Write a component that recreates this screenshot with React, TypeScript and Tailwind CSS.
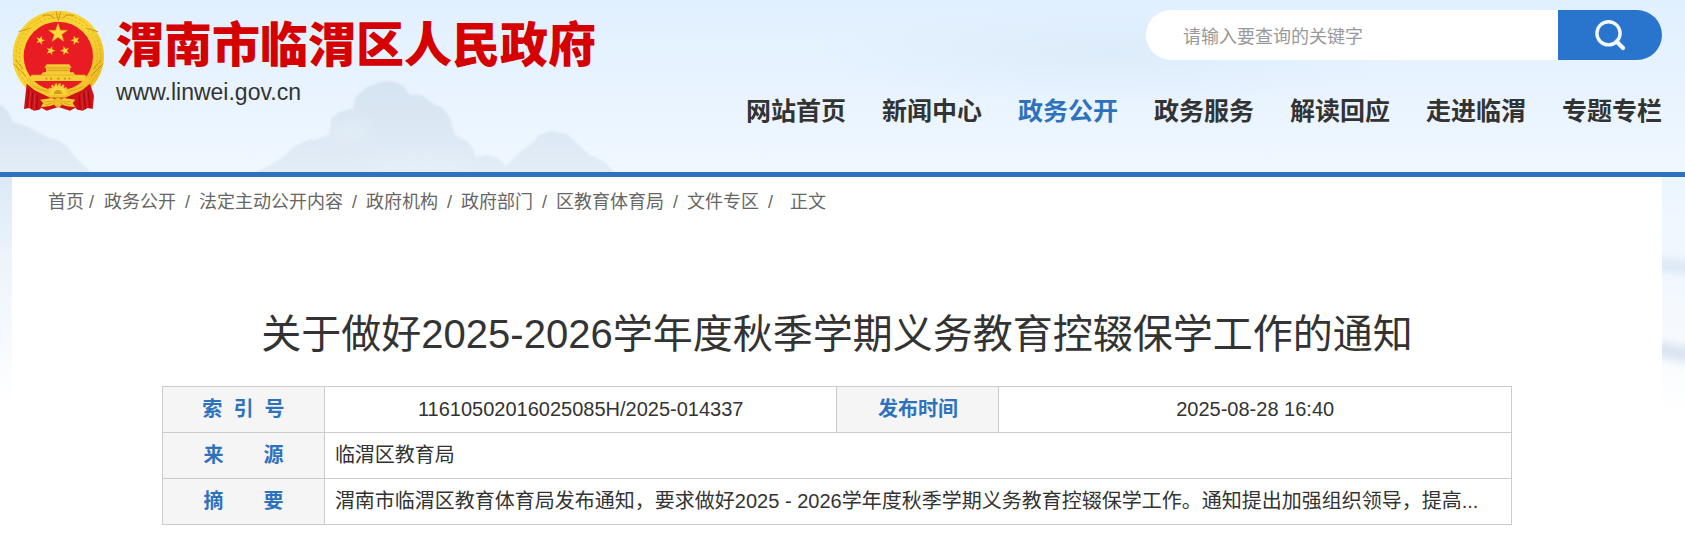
import React from "react";

type NavItem = {
  label: string;
  active?: boolean;
};

const navItems: NavItem[] = [
  { label: "网站首页" },
  { label: "新闻中心" },
  { label: "政务公开", active: true },
  { label: "政务服务" },
  { label: "解读回应" },
  { label: "走进临渭" },
  { label: "专题专栏" },
];

const crumbs = [
  "政务公开",
  "法定主动公开内容",
  "政府机构",
  "政府部门",
  "区教育体育局",
  "文件专区",
];

const STAR = "M0 -10 L2.4 -3.2 9.5 -3.1 3.8 1.2 5.9 8.1 0 4 -5.9 8.1 -3.8 1.2 -9.5 -3.1 -2.4 -3.2Z";

function Emblem() {
  return (
    <svg viewBox="36 27 279 306" className="h-[102px] w-[93px] shrink-0" aria-hidden="true">
      <defs>
        <linearGradient id="gold" x1="0" y1="0" x2="1" y2="1">
          <stop offset="0" stopColor="#f6cf2c" />
          <stop offset="0.5" stopColor="#f9d536" />
          <stop offset="1" stopColor="#e9b11c" />
        </linearGradient>
      </defs>
      <ellipse cx="175" cy="165" rx="137" ry="136" fill="url(#gold)" />
      <ellipse cx="175" cy="165" rx="127" ry="126" fill="none" stroke="#d7a01c" strokeWidth="2" strokeDasharray="9 5" />
      <ellipse cx="175" cy="165" rx="117" ry="116" fill="none" stroke="#e0ab20" strokeWidth="3" strokeDasharray="5 7" />
      <g stroke="#c08a14" strokeWidth="2.5" fill="none">
        <path d="M56 92 L90 82 M294 92 L260 82M40 188 L78 226M310 188 L272 226M46 176 L70 204M304 176 L280 204" />
        <path d="M168 32 L175 58 L182 32M128 44 Q150 36 165 54M222 44 Q200 36 185 54" />
      </g>
      <circle cx="175" cy="166" r="104" fill="#e81c22" />
      <g fill="#fbd93a" stroke="#d99c1c" strokeWidth="0.5">
        <path d={STAR} transform="translate(174 97) scale(3)" />
        <path d={STAR} transform="translate(121 118) rotate(18) scale(1.4)" />
        <path d={STAR} transform="translate(226 118) rotate(-18) scale(1.4)" />
        <path d={STAR} transform="translate(152 149) rotate(18) scale(1.4)" />
        <path d={STAR} transform="translate(195 149) rotate(-18) scale(1.4)" />
      </g>
      {/* gate tower */}
      <path d="M140 190 H208 L215 200 H210 V216 H138 V200 H133Z" fill="#f4c634" />
      <path d="M132 201 H216M139 208 H209" stroke="#c98a14" strokeWidth="2" />
      <path d="M129 214 H220 L226 222 H256 L262 240 H88 L94 222 H123Z" fill="#f7cd35" />
      <path d="M94 222 H256" stroke="#dca322" strokeWidth="2" />
      <path d="M137 233 h5M151 233 h5M172 233 h6M193 233 h5M206 233 h5" stroke="#c98a14" strokeWidth="5" />
      {/* drapes */}
      <path d="M80 248 L104 268 150 290 H196 L246 268 270 248 282 284 278 324 262 321 248 329 232 326 226 320 210 329 175 318 140 329 124 320 118 326 102 329 88 321 72 324 76 284Z" fill="#cf1118" />
      <path d="M86 266 L80 320M98 274 L94 325M112 282 L110 325M264 266 L270 320M252 274 L256 325M238 282 L240 325" stroke="#960c12" strokeWidth="3" />
      <path d="M92 270 L88 318M105 278 L102 326M258 270 L262 318M245 278 L248 326" stroke="#ec3a3a" strokeWidth="2" />
      {/* wheat band and gear */}
      <path d="M82 232 Q108 266 150 272 H198 Q240 266 266 232" fill="none" stroke="#f3c42e" strokeWidth="13" />
      <path d="M98 256 Q122 268 148 272M250 256 Q226 268 200 272" fill="none" stroke="#cf9a1c" strokeWidth="2" />
      <path d="M146 281 A28 28 0 0 1 202 281Z" fill="#f8d33c" />
      <path d="M146 278 A28 27 0 0 1 202 278" fill="none" stroke="#f3c42e" strokeWidth="8" strokeDasharray="7 4" />
      <path d="M162 279 A12 12 0 0 1 186 279Z" fill="#d59b1d" />
      {/* ribbon knot */}
      <path d="M120 296 L156 291 174 296 192 291 226 296 218 306 226 319 198 315 174 306 150 315 122 319 130 306Z" fill="#f5c932" />
      <path d="M136 302 L158 302M212 302 L190 302M136 312 L156 307M212 312 L192 307" stroke="#cf9418" strokeWidth="2" />
      <ellipse cx="174" cy="304" rx="13" ry="14" fill="#f0bb28" stroke="#cf9418" strokeWidth="1.5" />
    </svg>
  );
}

function HeaderScenery() {
  return (
    <>
      <svg
        viewBox="0 0 640 172"
        className="absolute bottom-0 left-0 h-[172px] w-[640px]"
        aria-hidden="true"
      >
        <defs>
          <linearGradient id="peak" x1="0" y1="80" x2="0" y2="172" gradientUnits="userSpaceOnUse">
            <stop offset="0" stopColor="#d6e4f2" />
            <stop offset="0.5" stopColor="#dbe7f3" />
            <stop offset="1" stopColor="#e3ecf6" />
          </linearGradient>
          <filter id="mist" x="-5%" y="-5%" width="110%" height="110%">
            <feGaussianBlur stdDeviation="1" />
          </filter>
          <filter id="haze" x="-50%" y="-50%" width="200%" height="200%">
            <feGaussianBlur stdDeviation="8" />
          </filter>
        </defs>
        <g fill="url(#peak)" filter="url(#mist)">
          <path d="M-4 102 L4 107 9 113 13 122 20 124 28 127 38 132 47 137 60 141 68 147 74 156 82 164 94 174 H-4Z" />
          <path d="M252 174 L268 166 282 158 292 148 305 141 318 139 330 134 331 118 340 112 353 108 355 98 367 87 380 82 392 81 404 86 410 95 422 95 432 103 443 108 450 118 455 135 468 142 474 150 475 157 487 155 498 158 506 166 520 152 533 143 539 135 552 131 567 134 580 146 590 155 603 161 617 174Z" />
        </g>
        <g fill="#eaf3fc" opacity="0.5" filter="url(#haze)">
          <ellipse cx="350" cy="132" rx="24" ry="8" />
          <ellipse cx="420" cy="166" rx="50" ry="10" />
        </g>
      </svg>
      <div className="absolute top-0 right-64 h-[110px] w-[640px] bg-[radial-gradient(ellipse_at_center,#d8e8f7_0%,transparent_65%)] opacity-60" />
    </>
  );
}

function SearchBox() {
  return (
    <form
      className="flex h-[50px] w-[516px] max-w-full overflow-hidden rounded-full bg-white"
      onSubmit={(e) => e.preventDefault()}
    >
      <input
        type="text"
        aria-label="搜索"
        placeholder="请输入要查询的关键字"
        className="min-w-0 flex-1 pt-1 pl-[37px] text-[18px] outline-none placeholder:text-[#999]"
      />
      <button
        type="submit"
        aria-label="提交"
        className="flex w-[104px] items-center justify-center bg-[#2974cd]"
      >
        <svg viewBox="0 0 32 32" className="size-8" fill="none" stroke="#f2f8ff" strokeWidth="3.4">
          <circle cx="14.5" cy="14.3" r="11.6" />
          <path d="M22.5 22.5 L29 29" strokeWidth="4.2" strokeLinecap="round" />
        </svg>
      </button>
    </form>
  );
}

function Header() {
  return (
    <header className="relative border-b-[5px] border-[#2e72be] bg-linear-to-b from-[#e1f0ff] via-[#e8f3ff] to-[#f0f8ff]">
      <HeaderScenery />
      <div className="relative flex items-start justify-between pt-[10px] pr-[23px] pb-[41px] pl-3">
        <a href="#" className="flex shrink-0 gap-[11px]">
          <Emblem />
          <div>
            <div className="mt-2 text-[48px] leading-[56px] font-black text-[#d50000]">
              渭南市临渭区人民政府
            </div>
            <div className="text-[23px] leading-[36px] text-[#333]">www.linwei.gov.cn</div>
          </div>
        </a>
        <div className="flex flex-col items-end gap-[31px]">
          <SearchBox />
          <nav className="flex gap-9 text-[25px] leading-[40px] font-bold whitespace-nowrap">
            {navItems.map((item) => (
              <a
                key={item.label}
                href="#"
                className={item.active ? "text-[#2e72be]" : "text-[#333]"}
              >
                {item.label}
              </a>
            ))}
          </nav>
        </div>
      </div>
    </header>
  );
}

function Breadcrumb() {
  return (
    <div className="flex flex-wrap px-9 pt-[10px] text-[18px] leading-[30px] text-[#666]">
      <a href="#">首页</a>
      <span className="mr-[10px] ml-[5px]">/</span>
      {crumbs.map((crumb) => (
        <React.Fragment key={crumb}>
          <a href="#">{crumb}</a>
          <span className="mx-[9px]">/</span>
        </React.Fragment>
      ))}
      <span className="ml-2">正文</span>
    </div>
  );
}

function InfoTable() {
  const th = "border border-[#ccc] bg-[#f5f5f5] font-bold text-[#2e72be]";
  const td = "border border-[#ccc]";

  return (
    <table className="w-full table-fixed border-collapse text-[20px] leading-[45px] text-[#333]">
      <colgroup>
        <col className="w-[12%]" />
        <col className="w-[38%]" />
        <col className="w-[12%]" />
        <col className="w-[38%]" />
      </colgroup>
      <tbody>
        <tr>
          <th scope="row" className={th}>
            索&nbsp;&nbsp;引&nbsp;&nbsp;号
          </th>
          <td className={`${td} text-center`}>11610502016025085H/2025-014337</td>
          <th scope="row" className={th}>
            发布时间
          </th>
          <td className={`${td} text-center`}>2025-08-28 16:40</td>
        </tr>
        <tr>
          <th scope="row" className={th}>
            来&emsp;&emsp;源
          </th>
          <td colSpan={3} className={`${td} px-[10px]`}>
            临渭区教育局
          </td>
        </tr>
        <tr>
          <th scope="row" className={th}>
            摘&emsp;&emsp;要
          </th>
          <td colSpan={3} className={`${td} truncate px-[10px]`}>
            渭南市临渭区教育体育局发布通知，要求做好2025 - 2026学年度秋季学期义务教育控辍保学工作。通知提出加强组织领导，提高...
          </td>
        </tr>
      </tbody>
    </table>
  );
}

function SideClouds() {
  return (
    <svg
      viewBox="0 0 23 240"
      className="absolute top-0 right-0 h-[240px] w-[23px]"
      aria-hidden="true"
    >
      <defs>
        <linearGradient id="sky" x1="0" y1="0" x2="0" y2="1">
          <stop offset="0" stopColor="#ecf6ff" />
          <stop offset="0.6" stopColor="#f5f9fe" />
          <stop offset="1" stopColor="#ffffff" />
        </linearGradient>
        <filter id="soft" x="-50%" y="-50%" width="200%" height="200%">
          <feGaussianBlur stdDeviation="4" />
        </filter>
      </defs>
      <rect width="23" height="240" fill="url(#sky)" />
      <g filter="url(#soft)">
        <path d="M-6 80 L30 84 V98 L-6 94Z" fill="#dbe9f6" />
        <path d="M-6 164 L30 170 V186 L-6 180Z" fill="#d9e4f2" />
      </g>
    </svg>
  );
}

export default function App() {
  return (
    <div className="min-h-screen bg-white font-['Liberation_Sans','Noto_Sans_CJK_SC',sans-serif]">
      <Header />
      <div className="relative bg-[linear-gradient(to_bottom,#dce9f6_0,#ecf4fc_80px,#ffffff_230px)] pr-[23px] pl-3">
        <SideClouds />
        <main className="relative bg-white pb-2">
          <Breadcrumb />
          <div className="px-[150px] pt-[87px]">
            <h1 className="mb-[22px] text-center text-[40px] leading-[60px] text-[#333]">
              关于做好2025-2026学年度秋季学期义务教育控辍保学工作的通知
            </h1>
            <InfoTable />
          </div>
        </main>
      </div>
    </div>
  );
}
